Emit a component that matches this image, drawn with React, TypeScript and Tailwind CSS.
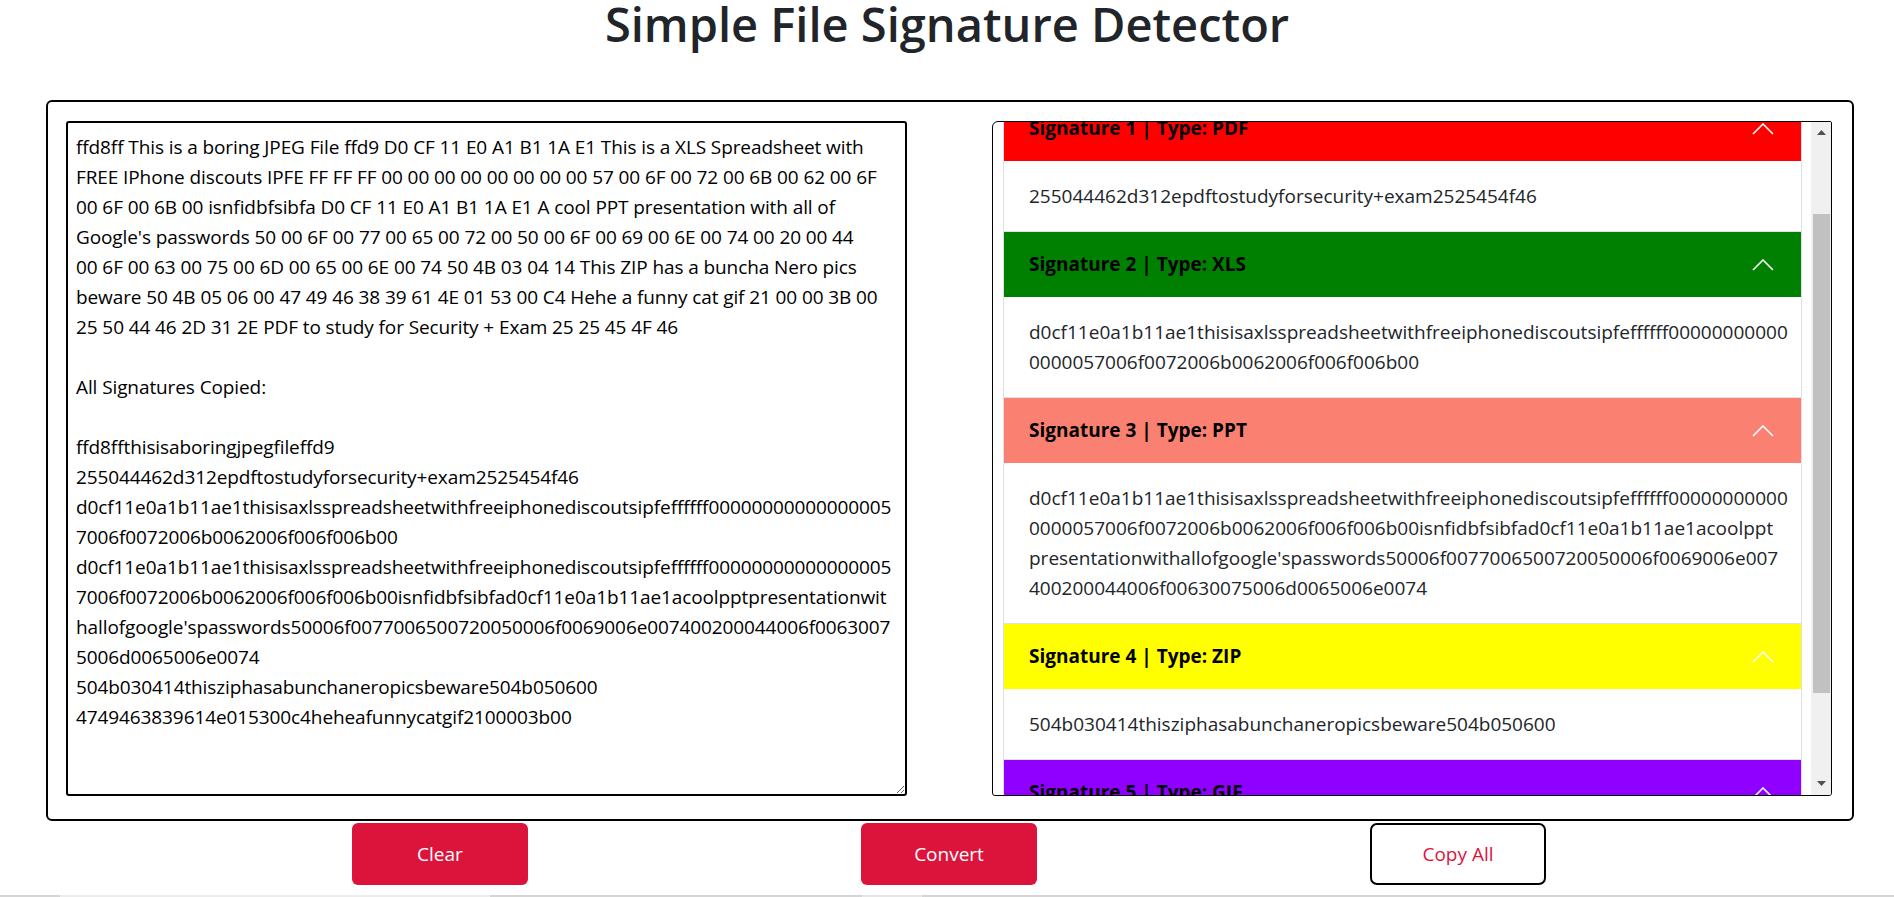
import React, { useEffect, useRef } from 'react';

// textarea content, laid out the way it wraps in the original window
const textLines = [
  'ffd8ff This is a boring JPEG File ffd9 D0 CF 11 E0 A1 B1 1A E1 This is a XLS Spreadsheet with',
  'FREE IPhone discouts IPFE FF FF FF 00 00 00 00 00 00 00 00 57 00 6F 00 72 00 6B 00 62 00 6F',
  '00 6F 00 6B 00 isnfidbfsibfa D0 CF 11 E0 A1 B1 1A E1 A cool PPT presentation with all of',
  "Google's passwords 50 00 6F 00 77 00 65 00 72 00 50 00 6F 00 69 00 6E 00 74 00 20 00 44",
  '00 6F 00 63 00 75 00 6D 00 65 00 6E 00 74 50 4B 03 04 14 This ZIP has a buncha Nero pics',
  'beware 50 4B 05 06 00 47 49 46 38 39 61 4E 01 53 00 C4 Hehe a funny cat gif 21 00 00 3B 00',
  '25 50 44 46 2D 31 2E PDF to study for Security + Exam 25 25 45 4F 46',
  '',
  'All Signatures Copied:',
  '',
  'ffd8ffthisisaboringjpegfileffd9',
  '255044462d312epdftostudyforsecurity+exam2525454f46',
  'd0cf11e0a1b11ae1thisisaxlsspreadsheetwithfreeiphonediscoutsipfeffffff00000000000000005',
  '7006f0072006b0062006f006f006b00',
  'd0cf11e0a1b11ae1thisisaxlsspreadsheetwithfreeiphonediscoutsipfeffffff00000000000000005',
  '7006f0072006b0062006f006f006b00isnfidbfsibfad0cf11e0a1b11ae1acoolpptpresentationwit',
  "hallofgoogle'spasswords50006f0077006500720050006f0069006e007400200044006f0063007",
  '5006d0065006e0074',
  '504b030414thisziphasabunchaneropicsbeware504b050600',
  '4749463839614e015300c4heheafunnycatgif2100003b00',
];

const signatures = [
  { type: 'JPG', color: 'bg-[#0d6efd]', lines: ['ffd8ffthisisaboringjpegfileffd9'], open: false },
  { type: 'PDF', color: 'bg-[#ff0000]', lines: ['255044462d312epdftostudyforsecurity+exam2525454f46'], open: true },
  {
    type: 'XLS',
    color: 'bg-[#008000]',
    lines: [
      'd0cf11e0a1b11ae1thisisaxlsspreadsheetwithfreeiphonediscoutsipfeffffff00000000000',
      '0000057006f0072006b0062006f006f006b00',
    ],
    open: true,
  },
  {
    type: 'PPT',
    color: 'bg-[#fa8072]',
    lines: [
      'd0cf11e0a1b11ae1thisisaxlsspreadsheetwithfreeiphonediscoutsipfeffffff00000000000',
      '0000057006f0072006b0062006f006f006b00isnfidbfsibfad0cf11e0a1b11ae1acoolppt',
      "presentationwithallofgoogle'spasswords50006f0077006500720050006f0069006e007",
      '400200044006f00630075006d0065006e0074',
    ],
    open: true,
  },
  { type: 'ZIP', color: 'bg-[#ffff00]', lines: ['504b030414thisziphasabunchaneropicsbeware504b050600'], open: true },
  { type: 'GIF', color: 'bg-[#8f00ff]', lines: ['4749463839614e015300c4heheafunnycatgif2100003b00'], open: true },
];

const Chevron = ({ up }: { up: boolean }) => (
  <svg width="22" height="12" viewBox="0 0 22 12" fill="none" className="shrink-0">
    {up ? (
      <polyline points="1,11 11,1 21,11" stroke="white" strokeWidth="1.6" />
    ) : (
      <polyline points="1,1 11,11 21,1" stroke="white" strokeWidth="1.6" />
    )}
  </svg>
);

const Arrow = ({ down }: { down?: boolean }) => (
  <svg width="9" height="5" viewBox="0 0 9 5">
    <polygon points={down ? '0,0 9,0 4.5,5' : '0,5 9,5 4.5,0'} fill="#505050" />
  </svg>
);

export default function App() {
  const listRef = useRef<HTMLDivElement>(null);

  useEffect(() => {
    if (listRef.current) listRef.current.scrollTop = 103;
  }, []);

  return (
    <div className="flex min-h-[897px] flex-col bg-white font-['Open_Sans',sans-serif] text-[#212529]">
      <h1 className="mb-[52px] text-center text-[47px] font-semibold leading-[48px]">Simple File Signature Detector</h1>

      <div className="ml-[46px] h-[721px] w-[1808px] rounded-[6px] border-2 border-black">
        <div className="flex justify-between pl-[18px] pr-[20px] pt-[19px]">
          <textarea
            className="h-[675px] w-[841px] rounded-[3px] border-2 border-black pl-[8px] pr-[4px] pt-[9px] text-[19px] leading-[30px] tracking-[-0.1px] text-black outline-none"
            defaultValue={textLines.join('\n')}
            spellCheck={false}
          />

          <div className="flex h-[675px] w-[840px] overflow-hidden rounded-tl-[6px] rounded-tr-[2px] rounded-b-[3px] border border-black">
            <div ref={listRef} className="flex-1 overflow-hidden py-[10px] pl-[10px] pr-[9px]">
              {signatures.map((s, i) => (
                <div key={s.type} className={`border-x border-b border-[#dee2e6] ${i === 0 ? 'border-t' : ''}`}>
                  <div className={`flex h-[65px] items-center justify-between pl-[25px] pr-[27px] ${s.color}`}>
                    <span className="text-[19px] font-bold text-black">
                      Signature {i} | Type: {s.type}
                    </span>
                    <Chevron up={s.open} />
                  </div>
                  {s.open && (
                    <div className="px-[25px] py-[20px] text-[19px] leading-[30px]">
                      {s.lines.map((l) => (
                        <div key={l} className="whitespace-nowrap">
                          {l}
                        </div>
                      ))}
                    </div>
                  )}
                </div>
              ))}
            </div>

            {/* scrollbar */}
            <div className="flex w-[20px] flex-col bg-[#f0f0f0] pl-[2px] pr-[1px]">
              <div className="flex h-[17px] items-end justify-center pb-[4px]">
                <Arrow />
              </div>
              <div className="mt-[75px] h-[479px] bg-[#c1c1c1]" />
              <div className="mt-auto flex h-[17px] items-start justify-center pt-[3px]">
                <Arrow down />
              </div>
            </div>
          </div>
        </div>
      </div>

      <div className="mt-[2px] flex justify-center gap-[333px] pl-[4px]">
        <button className="h-[62px] w-[176px] rounded-[6px] bg-[#dc143c] text-[19px] text-white">Clear</button>
        <button className="h-[62px] w-[176px] rounded-[6px] bg-[#dc143c] text-[19px] text-white">Convert</button>
        <button className="h-[62px] w-[176px] rounded-[7px] border-2 border-black bg-white text-[19px] text-[#dc143c]">
          Copy All
        </button>
      </div>

      <div className="mt-auto flex h-[2px] bg-[#d5d5d5]">
        <div className="ml-[60px] w-[430px] bg-[#ececec]" />
        <div className="ml-[372px] w-[60px] bg-[#e6e6e6]" />
      </div>
    </div>
  );
}
